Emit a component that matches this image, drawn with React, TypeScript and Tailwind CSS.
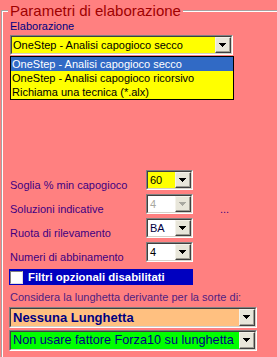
import React from "react";

const Arrow = ({ color = "#000000" }: { color?: string }) => (
  <svg width="7" height="4" viewBox="0 0 7 4" shapeRendering="crispEdges">
    <polygon points="0,0 7,0 4,4 3,4" fill={color} />
  </svg>
);

function Combo({
  outer,
  inner,
  children,
  disabled,
}: {
  outer: string;
  inner: string;
  children: React.ReactNode;
  disabled?: boolean;
}) {
  return (
    <div className={`flex border border-t-[#808080] border-l-[#808080] border-b-white border-r-white ${outer}`}>
      <div className="flex flex-1 border border-t-[#404040] border-l-[#404040] border-b-[#d4d0c8] border-r-[#d4d0c8]">
        <div className={`flex flex-1 items-center overflow-hidden whitespace-nowrap ${inner}`}>{children}</div>
        <div className="flex w-[16px] border border-t-[#f4f2ea] border-l-[#f4f2ea] border-b-[#404040] border-r-[#404040]">
          <div className="flex flex-1 items-center justify-center bg-[#e8e6da] border-b border-r border-b-[#a09e94] border-r-[#a09e94]">
            <Arrow color={disabled ? "#a8a8a0" : "#000000"} />
          </div>
        </div>
      </div>
    </div>
  );
}

function Row({ label, children, extra }: { label: string; children: React.ReactNode; extra?: React.ReactNode }) {
  return (
    <div className="flex items-start h-[20px]">
      <div className="w-[136px] pt-[9px] text-[11px] leading-[13px] text-[#400080]">{label}</div>
      {children}
      {extra}
    </div>
  );
}

export default function App() {
  return (
    <div className="w-[277px] h-[357px] overflow-hidden bg-[#ff8080] font-['Liberation_Sans',Arial,sans-serif]">
      <div className="relative mt-[10px] ml-[1px] h-[347px] border-t border-l border-[#a8a0a0]">
        {/* legend */}
        <div className="absolute left-[6px] top-[-9px] bg-[#ff8080] px-[2px] text-[15px] leading-[18px] text-[#a00000]">
          Parametri di elaborazione
        </div>
        <div className="h-full border-t border-l border-white pl-[7px]">
          <div className="mt-[8px] text-[11px] leading-[13px] text-[#000080]">Elaborazione</div>

          <div className="relative mt-[2px]">
            <Combo outer="w-[223px] h-[20px]" inner="bg-[#ffff00] pl-[1px] text-[11px] text-black">
              OneStep - Analisi capogioco secco
            </Combo>
            {/* open dropdown list */}
            <div className="absolute left-0 top-[21px] z-10 w-[224px] border border-black bg-[#ffff00] text-[11px] leading-[14px]">
              <div className="h-[14px] bg-[#316ac5] pl-[1px] text-white">OneStep - Analisi capogioco secco</div>
              <div className="h-[14px] pl-[1px] text-black">OneStep - Analisi capogioco ricorsivo</div>
              <div className="h-[14px] pl-[1px] text-black">Richiama una tecnica (*.alx)</div>
            </div>
          </div>

          <div className="mt-[115px] flex flex-col gap-[4px]">
            <Row label="Soglia % min capogioco">
              <Combo outer="w-[47px] h-[20px]" inner="bg-[#ffff00] pl-[2px] text-[11px] text-black">
                60
              </Combo>
            </Row>
            <Row
              label="Soluzioni indicative"
              extra={<div className="ml-[27px] pt-[9px] text-[11px] leading-[13px] text-[#400080]">...</div>}
            >
              <Combo outer="w-[47px] h-[20px]" inner="bg-white pl-[2px] text-[11px] text-[#a8a8a0]" disabled>
                4
              </Combo>
            </Row>
            <Row label="Ruota di rilevamento">
              <Combo outer="w-[47px] h-[20px]" inner="bg-white pl-[2px] text-[11px] text-[#000040]">
                BA
              </Combo>
            </Row>
            <Row label="Numeri di abbinamento">
              <Combo outer="w-[47px] h-[20px]" inner="bg-white pl-[2px] text-[11px] text-black">
                4
              </Combo>
            </Row>
          </div>

          <div className="mt-[7px] ml-[-1px] flex h-[16px] w-[184px] items-center bg-[#0000c0]">
            <div className="ml-[1px] h-[13px] w-[13px] border border-t-[#808080] border-l-[#808080] border-b-[#e0e0e0] border-r-[#e0e0e0] bg-white" />
            <span className="ml-[5px] text-[11.4px] font-bold leading-[14px] text-white">Filtri opzionali disabilitati</span>
          </div>

          <div className="mt-[6px] text-[11px] leading-[13px] text-[#502080]">
            Considera la lunghetta derivante per la sorte di:
          </div>

          <div className="mt-[3px] ml-[-1px] flex flex-col gap-[2px]">
            <Combo outer="w-[248px] h-[21px]" inner="bg-[#ffc080] pl-[2px] text-[13px] font-bold text-[#000080]">
              Nessuna Lunghetta
            </Combo>
            <Combo outer="w-[248px] h-[21px]" inner="bg-[#00ff00] pl-[2px] text-[12.7px] text-[#000080]">
              Non usare fattore Forza10 su lunghetta
            </Combo>
          </div>
        </div>
      </div>
    </div>
  );
}
